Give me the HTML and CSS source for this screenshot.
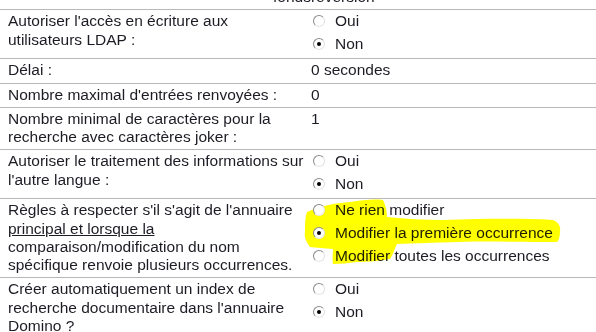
FILE: index.html
```html
<!DOCTYPE html>
<html lang="fr">
<head>
<meta charset="UTF-8">
<title>Paramètres LDAP</title>
<link rel="stylesheet" href="styles.css">
</head>
<body>
  <table class="settings">
    <tr class="cut">
      <td class="label"></td>
      <td class="value"><span class="prev">fondsreversion</span></td>
    </tr>
    <tr>
      <td class="label">Autoriser l'accès en écriture aux<br>utilisateurs LDAP :</td>
      <td class="value">
        <div class="option"><span class="radio"></span>Oui</div>
        <div class="option"><span class="radio checked"></span>Non</div>
      </td>
    </tr>
    <tr>
      <td class="label">Délai :</td>
      <td class="value">0 secondes</td>
    </tr>
    <tr>
      <td class="label">Nombre maximal d'entrées renvoyées :</td>
      <td class="value">0</td>
    </tr>
    <tr>
      <td class="label">Nombre minimal de caractères pour la<br>recherche avec caractères joker :</td>
      <td class="value">1</td>
    </tr>
    <tr>
      <td class="label">Autoriser le traitement des informations sur<br>l'autre langue :</td>
      <td class="value">
        <div class="option"><span class="radio"></span>Oui</div>
        <div class="option"><span class="radio checked"></span>Non</div>
      </td>
    </tr>
    <tr>
      <td class="label">Règles à respecter s'il s'agit de l'annuaire<br><u>principal et lorsque la </u><br>comparaison/modification du nom<br>spécifique renvoie plusieurs occurrences.</td>
      <td class="value marked">
        <svg class="highlight" width="270" height="80" viewBox="0 0 270 80">
          <path d="M7 14 C20 8 35 5 50 4 C62 2 74 1 83 2 C86 8 87 14 87 19 C105 21 125 22 143 22 C180 21 220 20 253 22 C258 24 261 28 260 33 C260 38 259 42 257 44 C225 44 190 43 157 44 C135 45 115 45 97 46 C94 52 93 57 90 61 C80 63 68 64 57 64 C48 65 40 66 33 66 C32 61 33 56 33 51 C24 50 16 50 10 49 C6 44 4 39 5 34 C5 26 5 19 7 14 Z" fill="#ffff00"/>
        </svg>
        <div class="option"><span class="radio"></span>Ne rien modifier</div>
        <div class="option"><span class="radio checked"></span>Modifier la première occurrence</div>
        <div class="option"><span class="radio"></span>Modifier toutes les occurrences</div>
      </td>
    </tr>
    <tr>
      <td class="label">Créer automatiquement un index de<br>recherche documentaire dans l'annuaire<br>Domino ?</td>
      <td class="value">
        <div class="option"><span class="radio"></span>Oui</div>
        <div class="option"><span class="radio checked"></span>Non</div>
      </td>
    </tr>
  </table>
</body>
</html>
```

FILE: styles.css
```css
body {
  margin: 0;
  height: 332px;
  overflow: hidden;
  background-color: #ffffff;
  font-family: "Liberation Sans", Arial, sans-serif;
  font-size: 15.5px;
  color: #1c1c24;
}

.settings {
  width: 100%;
  margin-top: -14px;
  border-collapse: collapse;
}

.settings tr {
  border-top: 1px solid #b8b8b8;
}

.settings tr.cut {
  border-top: none;
}

.settings td {
  vertical-align: top;
  line-height: 18.25px;
  padding: 2px 0 3px;
}

.settings tr.cut td {
  height: 15px;
}

.label {
  width: 297px;
  padding-left: 8px !important;
  white-space: nowrap;
}

.value {
  padding-left: 6px !important;
}

.prev {
  margin-left: -38px;
}

.marked {
  position: relative;
}

.highlight {
  position: absolute;
  left: -5px;
  top: -1px;
  mix-blend-mode: multiply;
  pointer-events: none;
}

.option {
  display: flex;
  align-items: center;
  height: 23px;
  margin-top: -3px;
}

.option + .option {
  margin-top: 0;
}

.radio {
  position: relative;
  flex: none;
  width: 10px;
  height: 10px;
  margin: 0 10px 0 2px;
  border-radius: 50%;
  border: 1px solid;
  border-color: #8a8a8a #e0e0e0 #e6e6e6 #8a8a8a;
  background-color: #ffffff;
}

.radio.checked::after {
  content: "";
  position: absolute;
  left: 3px;
  top: 3px;
  width: 4px;
  height: 4px;
  border-radius: 50%;
  background-color: #000000;
}
```
